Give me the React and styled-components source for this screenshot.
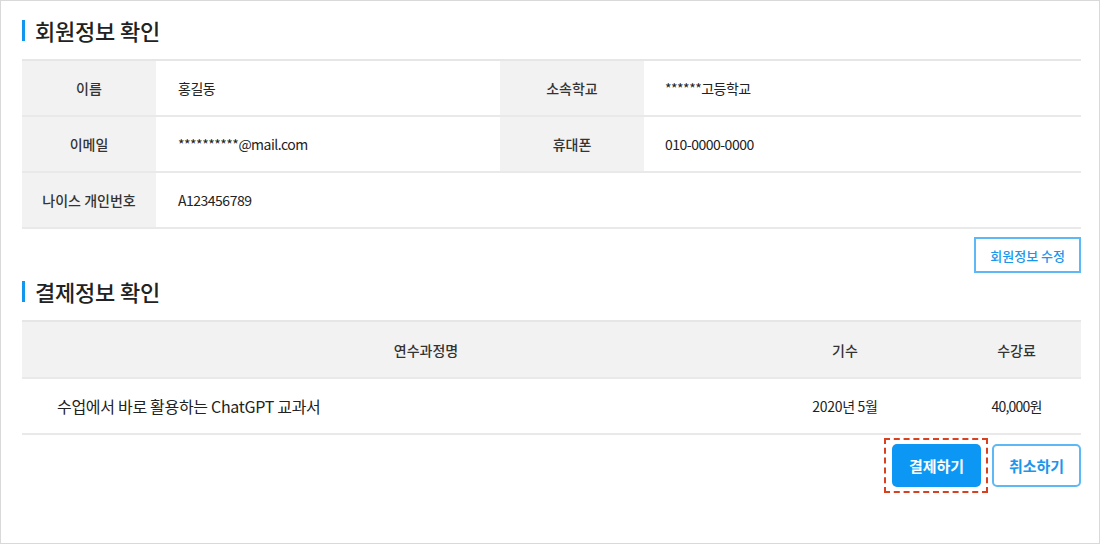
import React from "react";
import styled, { createGlobalStyle } from "styled-components";

const GlobalStyle = createGlobalStyle`
  html, body {
    margin: 0;
    padding: 0;
    background: #fff;
  }
  body {
    font-family: "Noto Sans CJK KR", "Noto Sans", sans-serif;
    color: #222;
  }
  * { box-sizing: border-box; }
`;

const Page = styled.div`
  width: 1100px;
  height: 544px;
  border: 1px solid #d9d9d9;
  padding: 17px 18px 0 21px;
`;

const Title = styled.h2`
  display: flex;
  align-items: center;
  gap: 10px;
  margin: ${(p) => p.$top || 0}px 0 ${(p) => p.$bottom || 17}px;
  height: 24px;
  font-size: 22px;
  font-weight: 500;
  color: #222;
  letter-spacing: -0.2px;

  &::before {
    content: "";
    width: 3px;
    height: 21px;
    background: #1296ee;
  }
`;

const InfoTable = styled.div`
  display: grid;
  grid-template-columns: 134px 344px 144px 1fr;
  border-top: 2px solid #e6e6e6;
`;

const Label = styled.div`
  height: 56px;
  display: flex;
  align-items: center;
  justify-content: center;
  background: #f2f2f2;
  border-bottom: 2px solid #e9e9e9;
  font-size: 14px;
  font-weight: 500;
  color: #333;
`;

const Value = styled.div`
  height: 56px;
  display: flex;
  align-items: center;
  padding-left: ${(p) => p.$pad || 22}px;
  border-bottom: 2px solid #e9e9e9;
  font-size: 14px;
  letter-spacing: -0.5px;
  color: #222;
  ${(p) => p.$span && `grid-column: span ${p.$span};`}
`;

const EditRow = styled.div`
  display: flex;
  justify-content: flex-end;
  margin-top: 8px;
`;

const OutlineButton = styled.button`
  width: ${(p) => (p.$w ? `${p.$w}px` : "auto")};
  height: ${(p) => p.$h || 36}px;
  padding: 0 ${(p) => p.$px || 14}px;
  background: #fff;
  border: 2px solid #5db9f6;
  border-radius: ${(p) => p.$radius || 0}px;
  color: #1a96ec;
  font-family: inherit;
  font-size: ${(p) => p.$fs || 13}px;
  font-weight: ${(p) => p.$fw || 500};
  cursor: pointer;
`;

const PayTable = styled.div`
  display: grid;
  grid-template-columns: 758px 130px 1fr;
  border-top: 2px solid #e6e6e6;
`;

const HeadCell = styled.div`
  height: 57px;
  display: flex;
  align-items: center;
  justify-content: center;
  padding-left: ${(p) => p.$pl || 0}px;
  background: #f2f2f2;
  border-bottom: 2px solid #e9e9e9;
  font-size: 14px;
  font-weight: 500;
  color: #333;
`;

const BodyCell = styled.div`
  height: 56px;
  display: flex;
  align-items: center;
  justify-content: ${(p) => (p.$left ? "flex-start" : "center")};
  padding-left: ${(p) => p.$pl || 0}px;
  border-bottom: 2px solid #e9e9e9;
  font-size: ${(p) => p.$fs || 14}px;
  letter-spacing: ${(p) => p.$ls || 0}px;
  color: #222;
`;

const ActionRow = styled.div`
  display: flex;
  justify-content: flex-end;
  align-items: center;
  gap: 4px;
  margin-top: 3px;
`;

const Highlight = styled.div`
  border: 2px dashed #d8401f;
  padding: 4px 5px 4px 6px;
`;

const PrimaryButton = styled.button`
  width: 89px;
  height: 43px;
  background: #0c97f4;
  border: none;
  border-radius: 5px;
  color: #fff;
  font-family: inherit;
  font-size: 15px;
  font-weight: 700;
  cursor: pointer;
`;

export default function App() {
  return (
    <>
      <GlobalStyle />
      <Page>
        <Title>회원정보 확인</Title>
        <InfoTable>
          <Label>이름</Label>
          <Value>홍길동</Value>
          <Label>소속학교</Label>
          <Value $pad={21}>******고등학교</Value>
          <Label>이메일</Label>
          <Value>**********@mail.com</Value>
          <Label>휴대폰</Label>
          <Value $pad={21}>010-0000-0000</Value>
          <Label>나이스 개인번호</Label>
          <Value $span={3}>A123456789</Value>
        </InfoTable>
        <EditRow>
          <OutlineButton>회원정보 수정</OutlineButton>
        </EditRow>

        <Title $top={6}>결제정보 확인</Title>
        <PayTable>
          <HeadCell $pl={50}>연수과정명</HeadCell>
          <HeadCell>기수</HeadCell>
          <HeadCell $pl={42}>수강료</HeadCell>
          <BodyCell $left $pl={35} $fs={16} $ls={-0.3}>
            수업에서 바로 활용하는 ChatGPT 교과서
          </BodyCell>
          <BodyCell $ls={-0.3}>2020년 5월</BodyCell>
          <BodyCell $pl={42} $ls={-0.8}>40,000원</BodyCell>
        </PayTable>
        <ActionRow>
          <Highlight>
            <PrimaryButton>결제하기</PrimaryButton>
          </Highlight>
          <OutlineButton $w={89} $h={43} $px={0} $radius={5} $fs={15} $fw={700}>
            취소하기
          </OutlineButton>
        </ActionRow>
      </Page>
    </>
  );
}
